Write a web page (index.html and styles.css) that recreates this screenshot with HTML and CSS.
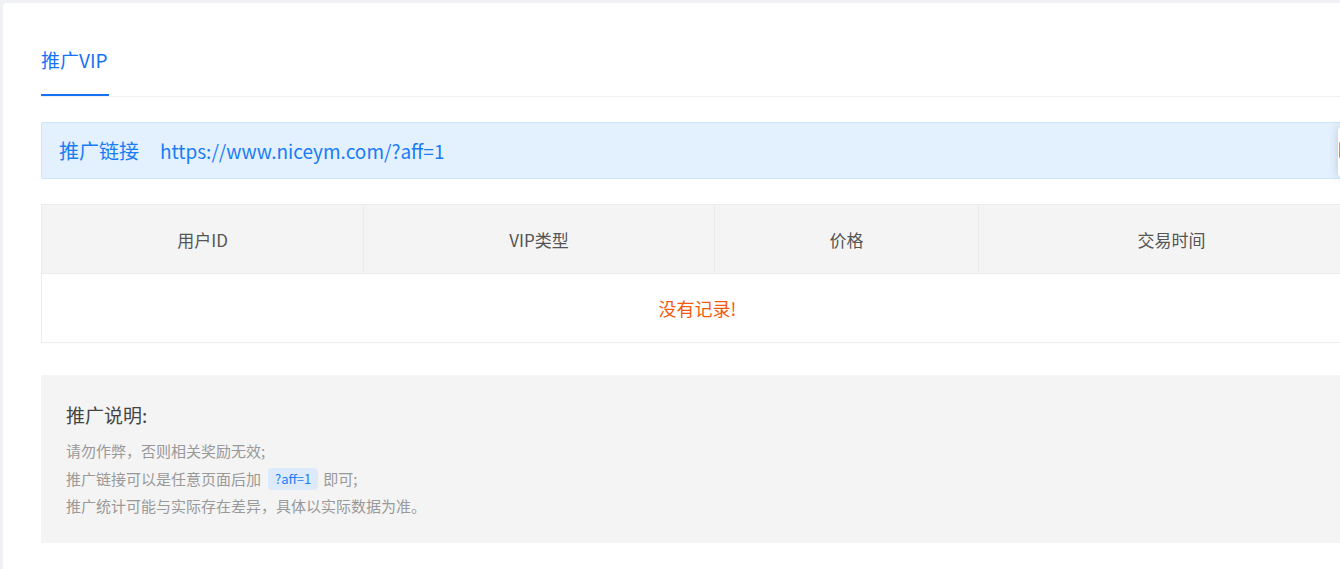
FILE: index.html
```html
<!DOCTYPE html>
<html lang="zh-CN">
<head>
<meta charset="utf-8">
<title>推广VIP</title>
<link rel="stylesheet" href="styles.css">
</head>
<body>
<div class="card">
  <div class="tabs">
    <div class="tab active">推广VIP</div>
  </div>
  <div class="aff-link">
    <span class="aff-label">推广链接</span>
    <span class="aff-url">https://www.niceym.com/?aff=1</span>
  </div>
  <table class="records">
    <colgroup>
      <col class="c1"><col class="c2"><col class="c3"><col class="c4">
    </colgroup>
    <thead>
      <tr><th>用户ID</th><th>VIP类型</th><th>价格</th><th>交易时间</th></tr>
    </thead>
    <tbody>
      <tr><td colspan="4" class="empty">没有记录!</td></tr>
    </tbody>
  </table>
  <div class="notes">
    <h3 class="notes-title">推广说明:</h3>
    <p class="note">请勿作弊，否则相关奖励无效;</p>
    <p class="note">推广链接可以是任意页面后加<span class="code">?aff=1</span>即可;</p>
    <p class="note">推广统计可能与实际存在差异，具体以实际数据为准。</p>
  </div>
</div>
<div class="float-bar"><span class="float-dot"></span></div>
</body>
</html>
```

FILE: styles.css
```css
html, body {
  margin: 0;
  padding: 0;
  overflow: hidden;
  height: 100%;
}
body {
  background: #eff1f4;
  font-family: "Noto Sans CJK SC", "Noto Sans", sans-serif;
  color: #333;
}
.card {
  margin: 3px 0 0 3px;
  width: 1323px;
  padding: 0 38px 40px 38px;
  background: #fff;
  border-radius: 4px;
  min-height: 600px;
}
.tabs {
  display: flex;
  border-bottom: 1px solid #f0f0f0;
}
.tab {
  font-size: 19px;
  line-height: 30px;
  padding: 42px 0 19px;
  width: 68px;
  white-space: nowrap;
}
.tab.active {
  color: #1672f5;
  border-bottom: 2px solid #1672f5;
}
.aff-link {
  margin-top: 25px;
  height: 55px;
  border: 1px solid #cde4fb;
  background: #e3f1fe;
  border-radius: 2px;
  display: flex;
  align-items: center;
  padding: 0 17px;
  color: #1a7cf5;
}
.aff-label {
  font-size: 20px;
  margin-right: 21px;
}
.aff-url {
  font-size: 19px;
}
.records {
  margin-top: 25px;
  width: 1323px;
  border-collapse: collapse;
  border: 1px solid #ececec;
  table-layout: fixed;
}
.c1 { width: 322px; }
.c2 { width: 351px; }
.c3 { width: 264px; }
.c4 { width: 386px; }
.records th {
  height: 68px;
  padding: 0;
  background: #f4f4f4;
  border-left: 1px solid #ececec;
  border-bottom: 1px solid #ececec;
  font-weight: normal;
  font-size: 17px;
  color: #555;
  text-align: center;
}
.records th:first-child { border-left: none; }
.records td.empty {
  height: 68px;
  padding: 0 11px 0 0;
  text-align: center;
  color: #f25a0f;
  font-size: 18px;
}
.notes {
  margin-top: 32px;
  background: #f4f4f4;
  border-radius: 2px;
  padding: 26px 25px 23px;
  width: 1273px;
}
.notes-title {
  margin: 0 0 9px;
  font-size: 19px;
  line-height: 27px;
  font-weight: normal;
  color: #444;
}
.note {
  margin: 0;
  font-size: 15px;
  line-height: 27.5px;
  color: #999;
}
.code {
  display: inline-block;
  margin: 0 5px 0 7px;
  padding: 0 7px;
  height: 22px;
  line-height: 22px;
  font-size: 13px;
  border-radius: 4px;
  background: #dceafa;
  color: #1a7cf5;
  vertical-align: middle;
  position: relative;
  top: -1px;
}
.float-bar {
  position: fixed;
  left: 1338px;
  top: 127px;
  width: 60px;
  height: 50px;
  background: #fff;
  border-radius: 4px;
  box-shadow: 0 0 10px rgba(0, 0, 0, 0.18);
}
.float-dot {
  position: absolute;
  left: 1px;
  top: 14px;
  width: 30px;
  height: 18px;
  border-radius: 3px;
  background: #ef7b57;
}
```
